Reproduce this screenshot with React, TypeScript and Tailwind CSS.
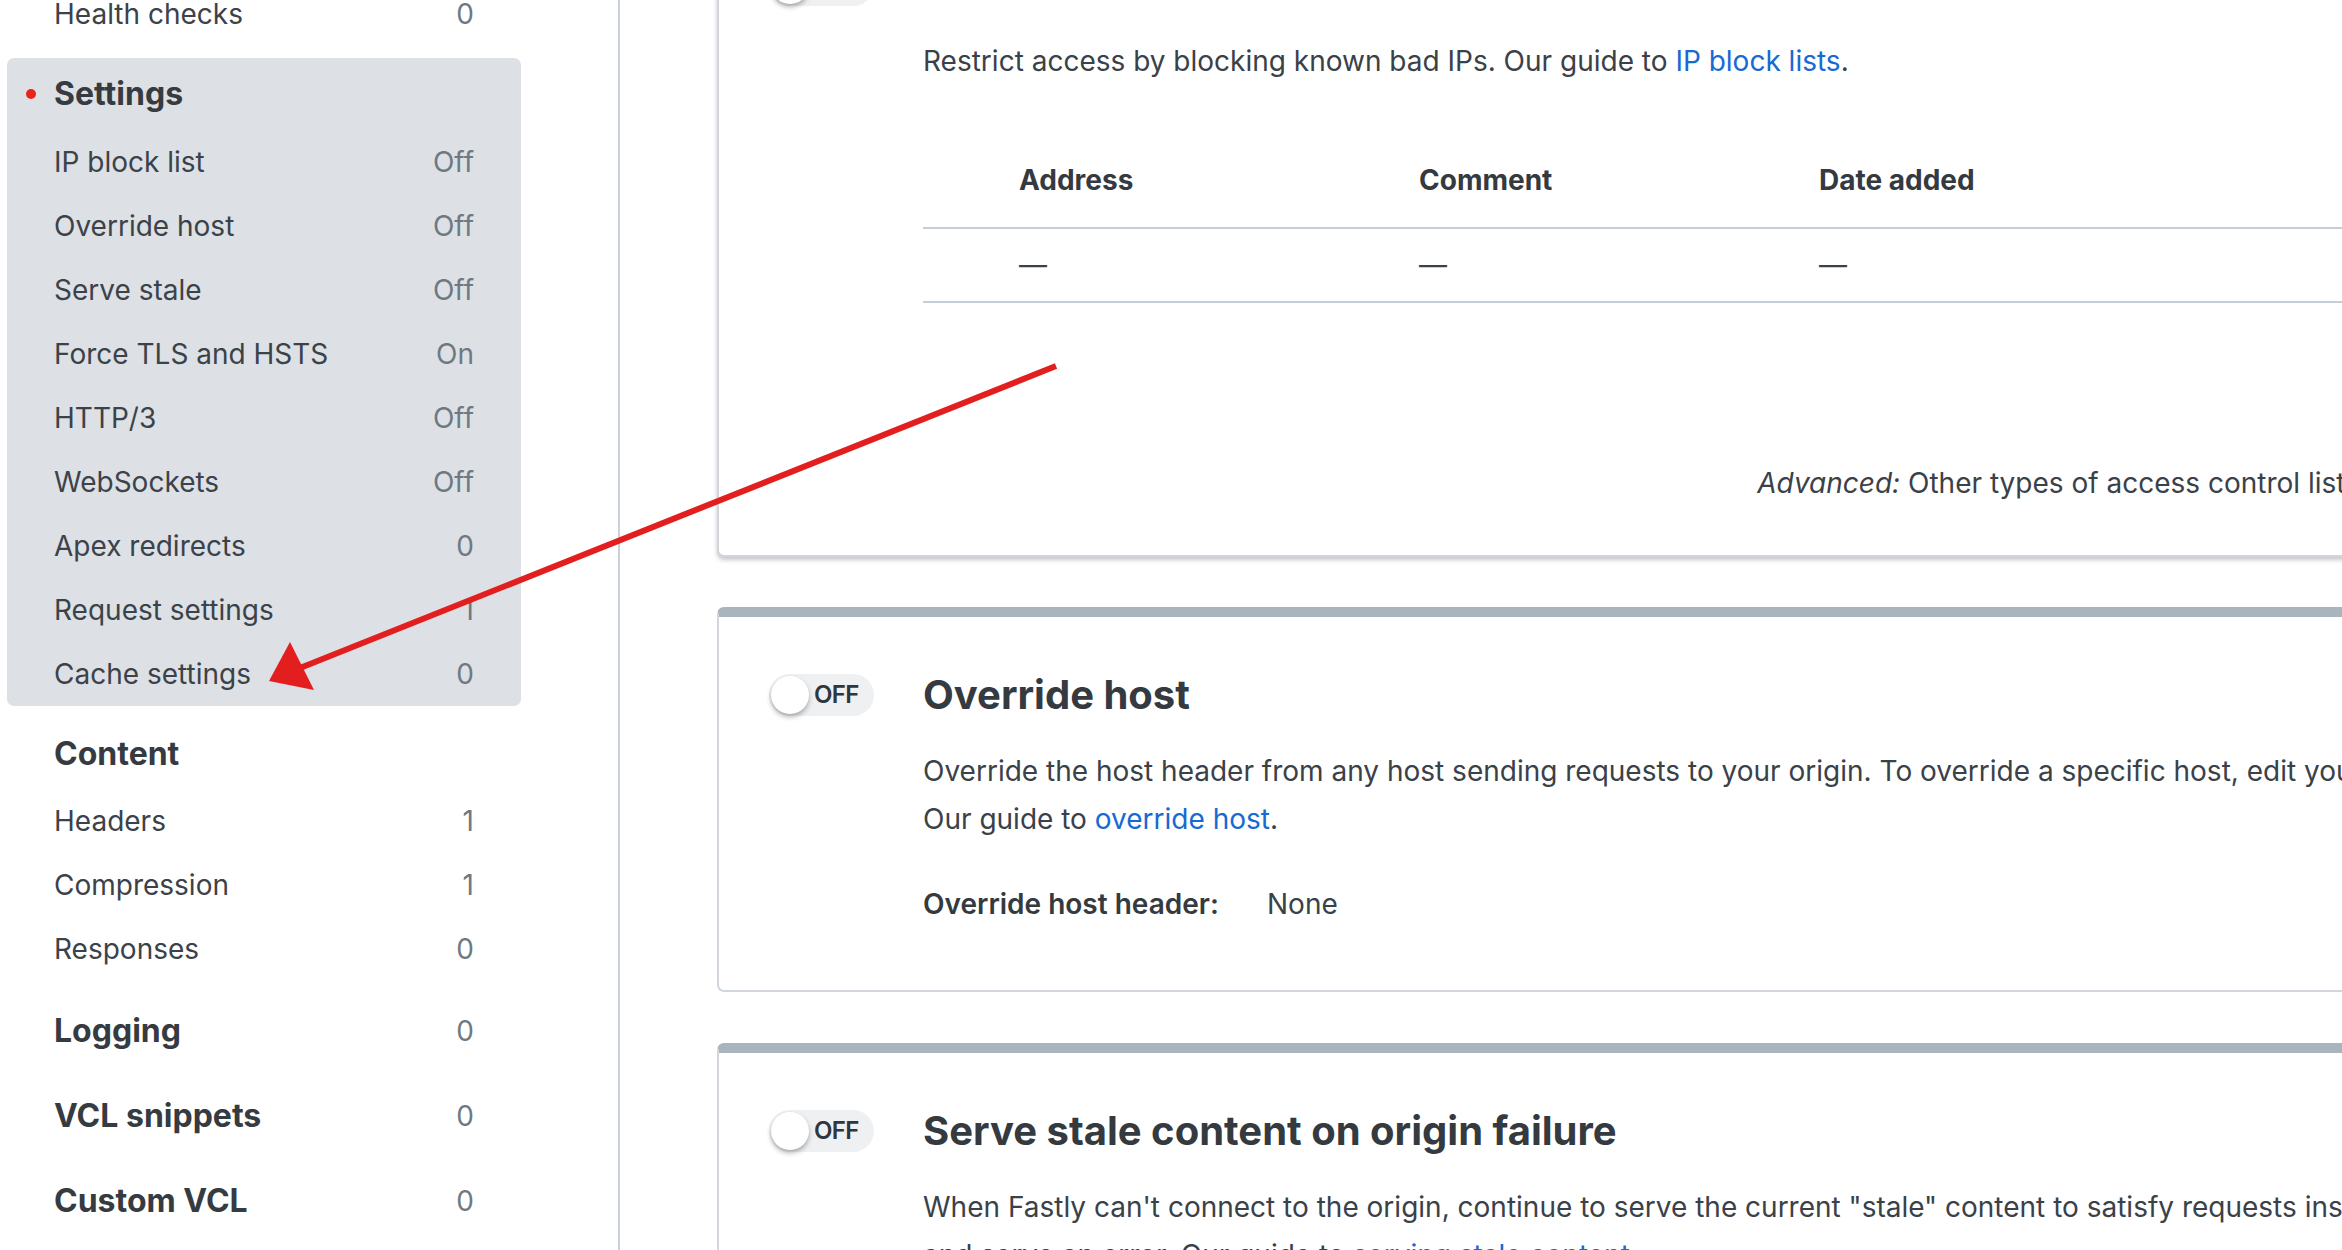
import React from "react";

const SideRow = ({ label, value, bold }: { label: string; value?: string; bold?: boolean }) => (
  <div className="h-[64px] flex items-center justify-between px-[47px]">
    <span className={bold ? "text-[32px] font-bold text-[#353b41]" : "text-[28px] text-[#3b4249]"}>{label}</span>
    {value !== undefined && <span className="text-[28px] text-[#6f7982]">{value}</span>}
  </div>
);

const SectionRow = ({ label, value }: { label: string; value: string }) => (
  <div className="h-[85px] flex items-center justify-between px-[47px]">
    <span className="text-[32px] font-bold text-[#353b41]">{label}</span>
    <span className="text-[28px] text-[#6f7982]">{value}</span>
  </div>
);

const Toggle = () => (
  <div className="w-[105px] h-[42px] rounded-full bg-[#eef0f2] flex items-center pl-[2px] shrink-0">
    <div className="w-[38px] h-[38px] rounded-full bg-white shadow-[0_3px_5px_rgba(0,0,0,0.3)]" />
    <span className="ml-[5px] text-[24px] font-semibold text-[#2f363d] tracking-tight">OFF</span>
  </div>
);

const Card = ({
  title,
  children,
  shadow,
  className,
}: {
  title: string;
  children: React.ReactNode;
  shadow?: boolean;
  className?: string;
}) => (
  <div
    className={
      "w-[1693px] shrink-0 rounded-[7px] border-2 border-t-[10px] border-[#d0d6dc] border-t-[#aab4bc] bg-white pl-[50px] pr-[48px] pt-[57px] " +
      (shadow ? "shadow-[0_3px_4px_rgba(0,0,0,0.22)] " : "") +
      (className ?? "")
    }
  >
    <div className="flex items-center h-[42px]">
      <div className="w-[154px] shrink-0">
        <Toggle />
      </div>
      <h2 className="text-[40px] font-bold text-[#343a40]">{title}</h2>
    </div>
    <div className="pl-[154px]">{children}</div>
  </div>
);

export default function App() {
  return (
    <div className="relative w-[2342px] h-[1250px] overflow-hidden bg-white flex font-['Inter','Noto_Sans',sans-serif]">
      {/* Sidebar */}
      <aside className="w-[620px] shrink-0 h-full border-r-2 border-[#c9d2db]">
        <div className="-mt-[18px] pl-[7px] w-[521px]">
          <SideRow label="Health checks" value="0" />
          <div className="mt-[12px] rounded-[7px] bg-[#dde0e4]">
            <div className="h-[72px] flex items-center pl-[19px]">
              <span className="w-[10px] h-[10px] rounded-full bg-[#e8241b]" />
              <span className="ml-[18px] text-[32px] font-bold text-[#353b41]">Settings</span>
            </div>
            <SideRow label="IP block list" value="Off" />
            <SideRow label="Override host" value="Off" />
            <SideRow label="Serve stale" value="Off" />
            <SideRow label="Force TLS and HSTS" value="On" />
            <SideRow label="HTTP/3" value="Off" />
            <SideRow label="WebSockets" value="Off" />
            <SideRow label="Apex redirects" value="0" />
            <SideRow label="Request settings" value="1" />
            <SideRow label="Cache settings" value="0" />
          </div>
          <div className="mt-[12px] h-[71px] flex items-center px-[47px]">
            <span className="text-[32px] font-bold text-[#353b41]">Content</span>
          </div>
          <SideRow label="Headers" value="1" />
          <SideRow label="Compression" value="1" />
          <SideRow label="Responses" value="0" />
          <div className="mt-[7px]">
            <SectionRow label="Logging" value="0" />
            <SectionRow label="VCL snippets" value="0" />
            <SectionRow label="Custom VCL" value="0" />
          </div>
        </div>
      </aside>

      {/* Main */}
      <main className="flex-1 min-w-0 h-full overflow-hidden pl-[97px]">
        <div className="-mt-[103px] flex flex-col text-[28px] text-[#3a4148]">
          <Card title="IP block list" shadow className="pb-[48px]">
            <p className="mt-[31px] leading-[48px] whitespace-nowrap">
              Restrict access by blocking known bad IPs. Our guide to{" "}
              <a className="text-[#1769d3]">IP block lists</a>.
            </p>
            <div className="mt-[48px]">
              <div className="flex h-[96px] items-center border-b-2 border-[#c5ced6] font-bold text-[#343a40]">
                <div className="w-[96px] shrink-0" />
                <div className="w-[400px] shrink-0">Address</div>
                <div className="w-[400px] shrink-0">Comment</div>
                <div className="w-[400px] shrink-0">Date added</div>
              </div>
              <div className="flex h-[74px] items-center border-b-2 border-[#c5ced6]">
                <div className="w-[96px] shrink-0" />
                <div className="w-[400px] shrink-0">—</div>
                <div className="w-[400px] shrink-0">—</div>
                <div className="w-[400px] shrink-0">—</div>
              </div>
            </div>
            <p className="mt-[156px] leading-[48px] text-right whitespace-nowrap">
              <em>Advanced:</em> Other types of access control lists
            </p>
          </Card>

          <Card title="Override host" className="mt-[50px] pb-[62px]">
            <div className="mt-[31px] leading-[48px] whitespace-nowrap">
              <p>
                Override the host header from any host sending requests to your origin. To override a specific host, edit your origin.
              </p>
              <p>
                Our guide to <a className="text-[#1769d3]">override host</a>.
              </p>
            </div>
            <div className="mt-[37px] flex leading-[48px]">
              <span className="w-[344px] shrink-0 font-semibold text-[#343a40]">Override host header:</span>
              <span>None</span>
            </div>
          </Card>

          <Card title="Serve stale content on origin failure" className="mt-[51px] pb-[62px]">
            <div className="mt-[31px] leading-[48px] whitespace-nowrap">
              <p>
                When Fastly can't connect to the origin, continue to serve the current "stale" content to satisfy requests instead of
              </p>
              <p>
                and serve an error. Our guide to <a className="text-[#1769d3]">serving stale content</a>.
              </p>
            </div>
          </Card>
        </div>
      </main>

      {/* Annotation arrow */}
      <svg className="absolute inset-0 pointer-events-none" width="2342" height="1250" viewBox="0 0 2342 1250">
        <line x1="1056" y1="366" x2="300" y2="668" stroke="#e31e1e" strokeWidth="6" />
        <polygon points="269,681 290,642 314,690" fill="#e31e1e" />
      </svg>
    </div>
  );
}
